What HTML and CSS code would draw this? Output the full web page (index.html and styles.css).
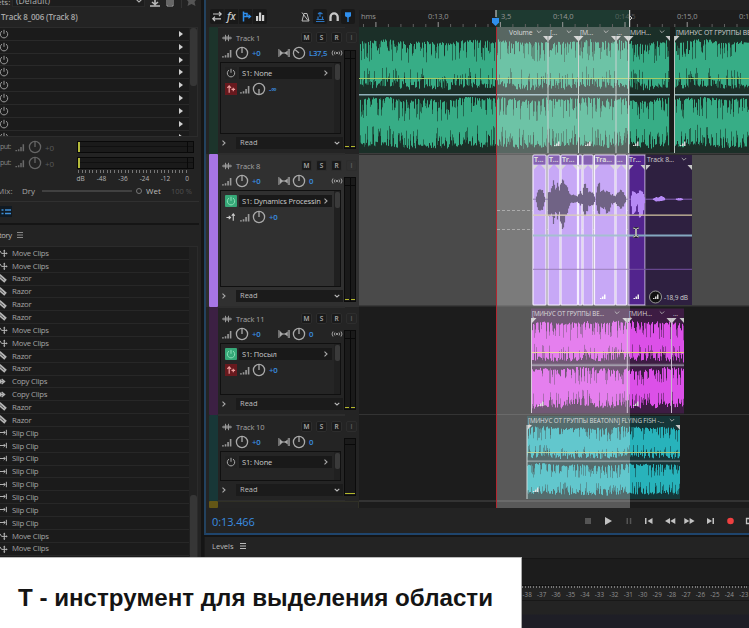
FILE: index.html
```html
<!DOCTYPE html>
<html lang="ru">
<head>
<meta charset="utf-8">
<title>Multitrack</title>
<link rel="stylesheet" href="styles.css">
</head>
<body>
<svg class="defs" aria-hidden="true">
  <symbol id="power" viewBox="0 0 10 10"><path d="M3 2.1a3.7 3.7 0 1 0 4 0M5 .8v4" fill="none" stroke="currentColor" stroke-width="1"/></symbol>
  <symbol id="knob" viewBox="0 0 14 14"><circle cx="7" cy="7" r="5.6" fill="none" stroke="currentColor" stroke-width="1.3"/><path d="M7 2v5" stroke="currentColor" stroke-width="1.3"/></symbol>
  <symbol id="bars" viewBox="0 0 12 10"><path d="M.5 8h2v1.500h-2zM3.500 7h1.800v2.500H3.500zM6.300 4.500h1.800v5H6.300zM9.100 1h1.800v8.500H9.100z" fill="currentColor"/></symbol>
  <symbol id="pan" viewBox="0 0 12 10"><path d="M.8 1v8M10.300 1v8M11.400 1v8" stroke="currentColor" stroke-width=".8"/><path d="M1.500 1.500 5 5 1.500 8.500zM9.700 2.500 6.500 5 9.700 7.500z" fill="currentColor"/><path d="M4 5h4" stroke="currentColor"/></symbol>
  <symbol id="wave" viewBox="0 0 10 8"><path d="M0 4h10M2 2.500v3M3.500 .8v6.400M5 2v4M6.500 .8v6.400M8 2.500v3" stroke="currentColor" stroke-width=".9"/></symbol>
  <symbol id="mono" viewBox="0 0 12 8"><path d="M2 1.500Q0 4 2 6.500M4 2.500Q2.800 4 4 5.500M8 2.500Q9.200 4 8 5.500M10 1.500Q12 4 10 6.500" fill="none" stroke="currentColor" stroke-width=".9"/><circle cx="6" cy="4" r="1.100" fill="currentColor"/></symbol>
  <symbol id="right" viewBox="0 0 6 8"><path d="M1.500 1.700 4 4 1.500 6.300" fill="none" stroke="currentColor" stroke-width="1.100"/></symbol>
  <symbol id="down" viewBox="0 0 8 6"><path d="M1.700 1.800 4 4 6.300 1.800" fill="none" stroke="currentColor" stroke-width="1.100"/></symbol>
  <symbol id="pre" viewBox="0 0 11 10"><path d="M3.500 9V2M1.500 3.800 3.500 1.500 5.500 3.800M6 5.500h4M8 3.500v4" fill="none" stroke="currentColor" stroke-width="1.300"/></symbol>
  <symbol id="post" viewBox="0 0 11 10"><path d="M.5 5.500h4M3 3.700l2 1.800-2 1.800M8 9V2M6.300 3.600 8 1.500 9.700 3.600" fill="none" stroke="currentColor" stroke-width="1.200"/></symbol>
  <symbol id="menu" viewBox="0 0 8 8"><path d="M1 1.500h6M1 4h6M1 6.500h6" stroke="currentColor"/></symbol>
  <symbol id="move" viewBox="0 0 12 10"><path d="M0 2.500h3M5 6h6M8 3v6.500M3 3l2 3" fill="none" stroke="currentColor" stroke-width="1.100"/><path d="M8 1.800 9.300 3.600H6.700zM8 10 9.300 8.400H6.700zM11.800 6 10 7.200V4.800z" fill="currentColor"/></symbol>
  <symbol id="razor" viewBox="0 0 12 10"><path d="M3.500 0 10.800 6.300 8 9.600.7 3.300z" fill="currentColor"/><path d="M3.600 3.200 8 7" stroke="#1c1c1c" stroke-width="1.100" stroke-dasharray="2 .8"/></symbol>
  <symbol id="copy" viewBox="0 0 12 10"><path d="M2 5h5M5 2.300 8.300 5 5 7.700M2 2l3 3-3 3" fill="none" stroke="currentColor" stroke-width="1.500"/></symbol>
  <symbol id="slip" viewBox="0 0 12 10"><path d="M1 5h8M10.300 2v6M3.300 3.300 1.500 5l1.800 1.700M7.300 3.300 9 5 7.300 6.700" fill="none" stroke="currentColor" stroke-width="1.100"/></symbol>
</svg>

<div class="app">
  <aside class="side">
    <div class="presets">
      <span class="presets-label">ets:</span>
      <div class="presets-select"><span>(Default)</span><svg class="i8"><use href="#down"/></svg></div>
      <svg class="presets-icons" viewBox="0 0 50 8"><path d="M1 6h10M3 2l3 2.500L9 2M6 0v4" fill="none" stroke="#bbb" stroke-width="1.600"/><path d="M18 0v6h6V0M20 0v5M22 0v5" fill="none" stroke="#aaa"/><path d="M32.500 0v8" stroke="#333"/><path d="M38 0h9l-1.500 2 1 4-4-2-4 2 1-4z" fill="#555"/></svg>
    </div>
    <div class="rack-title">Track 8_006 (Track 8)</div>
    <div class="rack">
      <div class="slots">
        <div class="slot"><svg><use href="#power"/></svg><i></i></div>
        <div class="slot"><svg><use href="#power"/></svg><i></i></div>
        <div class="slot"><svg><use href="#power"/></svg><i></i></div>
        <div class="slot"><svg><use href="#power"/></svg><i></i></div>
        <div class="slot"><svg><use href="#power"/></svg><i></i></div>
        <div class="slot"><svg><use href="#power"/></svg><i></i></div>
        <div class="slot"><svg><use href="#power"/></svg><i></i></div>
        <div class="slot"><svg><use href="#power"/></svg><i></i></div>
        <div class="slot"><svg><use href="#power"/></svg><i></i></div>
      </div>
      <div class="scroll"><b class="thumb-top"></b></div>
    </div>
    <div class="io"><span class="io-name">put:</span><svg class="i-bars"><use href="#bars"/></svg><svg class="i-knob"><use href="#knob"/></svg><span>+0</span><div class="io-meter"></div></div>
    <div class="io io-out"><span class="io-name">put:</span><svg class="i-bars"><use href="#bars"/></svg><svg class="i-knob"><use href="#knob"/></svg><span>+0</span><div class="io-meter"></div></div>
    <div class="db-ticks"></div>
    <div class="db-scale"><span>dB</span><span>-48</span><span>-36</span><span>-24</span><span>-12</span><span>0</span></div>
    <div class="mix"><span class="mix-name">Mix:</span><span class="mix-dry">Dry</span><div class="mix-line"></div><div class="mix-dot"></div><span class="mix-wet">Wet</span><span class="mix-val">100 %</span></div>
    <div class="rack-foot"><svg class="list-button" viewBox="0 0 12 11"><path d="M1.500 4h2M1.500 7.500h2M5 4h6M5 7.500h6" stroke="#3f8fd8" stroke-width="1.600"/></svg></div>
    <div class="history-head"><span>tory</span><svg class="i8"><use href="#menu"/></svg></div>
    <div class="history">
      <ul class="history-list">
        <li><svg><use href="#move"/></svg>Move Clips</li>
        <li><svg><use href="#move"/></svg>Move Clips</li>
        <li><svg><use href="#razor"/></svg>Razor</li>
        <li><svg><use href="#razor"/></svg>Razor</li>
        <li><svg><use href="#razor"/></svg>Razor</li>
        <li><svg><use href="#razor"/></svg>Razor</li>
        <li><svg><use href="#move"/></svg>Move Clips</li>
        <li><svg><use href="#move"/></svg>Move Clips</li>
        <li><svg><use href="#razor"/></svg>Razor</li>
        <li><svg><use href="#razor"/></svg>Razor</li>
        <li><svg><use href="#copy"/></svg>Copy Clips</li>
        <li><svg><use href="#copy"/></svg>Copy Clips</li>
        <li><svg><use href="#razor"/></svg>Razor</li>
        <li><svg><use href="#razor"/></svg>Razor</li>
        <li><svg><use href="#slip"/></svg>Slip Clip</li>
        <li><svg><use href="#slip"/></svg>Slip Clip</li>
        <li><svg><use href="#slip"/></svg>Slip Clip</li>
        <li><svg><use href="#slip"/></svg>Slip Clip</li>
        <li><svg><use href="#slip"/></svg>Slip Clip</li>
        <li><svg><use href="#slip"/></svg>Slip Clip</li>
        <li><svg><use href="#slip"/></svg>Slip Clip</li>
        <li><svg><use href="#slip"/></svg>Slip Clip</li>
        <li><svg><use href="#move"/></svg>Move Clips</li>
        <li><svg><use href="#move"/></svg>Move Clips</li>
      </ul>
      <div class="scroll"><b class="thumb-bottom"></b></div>
    </div>
  </aside>

  <main class="main">
    <section class="editor">
      <div class="top">
        <div class="tools">
          <svg class="tools-left" viewBox="0 0 57 15">
            <rect width="57" height="15" rx="2" fill="#191919"/>
            <path d="M14.200 0v15M28.400 0v15M42.600 0v15" stroke="#242424"/>
            <path d="M3 5h8M9 2.800 11.200 5 9 7.200M11 9.800H3M5 7.600 2.800 9.800 5 12" fill="none" stroke="#c8c8c8" stroke-width="1.200"/>
            <text x="17" y="11" class="fx">fx</text>
            <path d="M33.500 2.500v10M33.500 7.500h5.500M33.500 4.500h3.500v3" fill="none" stroke="#2f8fee" stroke-width="1.500"/><path d="M38.500 5l3 2.500-3 2.500z" fill="#2f8fee"/>
            <path d="M46 7h2.200v5H46zM49 3.500h2.200V12H49zM52 6h2.200v6H52z" fill="#d0d0d0"/>
          </svg>
          <svg class="tools-right" viewBox="0 0 57 15">
            <rect x="14" width="14" height="15" rx="2" fill="#191919"/><rect x="42" width="14" height="15" rx="2" fill="#191919"/>
            <path d="M3 12 5 4.500h3l2 7.500zM3 3.500l6 8" fill="none" stroke="#bbb"/>
            <path d="M17 12.500h8.500M17.500 10.500h7.500M19 10V7.500M23.500 10V7.500M21 3v5M19 5q2-2 4.500 0" fill="none" stroke="#2b74c0" stroke-width="1.200"/>
            <path d="M31.500 12V8a3.600 3.600 0 0 1 7.200 0v4" fill="none" stroke="#c8c8c8" stroke-width="2.300"/>
            <path d="M46 3.200h6v4l-3 1.600-3-1.600z" fill="#2f8fee"/><path d="M49 8v5" stroke="#2f8fee" stroke-width="1.300"/>
          </svg>
        </div>
        <svg class="ruler" id="ruler" viewBox="359 10 390 17"></svg>
      </div>

      <div class="session">
        <div class="track t1">
          <div class="strip"></div>
          <div class="head">
            <div class="name-row"><svg class="i-wave"><use href="#wave"/></svg><span class="name">Track 1</span><b>M</b><b>S</b><b>R</b><b class="dim">I</b></div>
            <div class="vol-row"><svg class="i-bars"><use href="#bars"/></svg><svg class="i-knob"><use href="#knob"/></svg><span class="val vol">+0</span><svg class="i-pan"><use href="#pan"/></svg><svg class="i-knob turned"><use href="#knob"/></svg><span class="val">L37,5</span><svg class="i-mono"><use href="#mono"/></svg></div>
            <div class="sends"><div class="send-list">
              <div class="send"><svg class="pw"><use href="#power"/></svg><div class="send-name"><span>S1: None</span><svg class="i-right"><use href="#right"/></svg></div></div>
              <div class="send-ctl"><svg class="route red"><use href="#pre"/></svg><svg class="i-bars"><use href="#bars"/></svg><svg class="i-knob flipped"><use href="#knob"/></svg><span class="val">-∞</span></div>
            </div><div class="send-scroll"><i></i></div></div>
            <div class="auto-row"><svg class="i-right"><use href="#right"/></svg><div class="auto"><span>Read</span><svg class="i8"><use href="#down"/></svg></div></div>
          </div>
          <div class="meter"><i></i></div>
          <svg class="lane" id="lane1" viewBox="359 27 390 127"></svg>
        </div>

        <div class="track t8">
          <div class="strip"></div>
          <div class="head">
            <div class="name-row"><svg class="i-wave"><use href="#wave"/></svg><span class="name">Track 8</span><b>M</b><b>S</b><b>R</b><b class="dim">I</b></div>
            <div class="vol-row"><svg class="i-bars"><use href="#bars"/></svg><svg class="i-knob"><use href="#knob"/></svg><span class="val vol">+0</span><svg class="i-pan"><use href="#pan"/></svg><svg class="i-knob"><use href="#knob"/></svg><span class="val">0</span><svg class="i-mono"><use href="#mono"/></svg></div>
            <div class="sends"><div class="send-list">
              <div class="send"><svg class="pw on"><use href="#power"/></svg><div class="send-name"><span>S1: Dynamics Processin</span><svg class="i-right"><use href="#right"/></svg></div></div>
              <div class="send-ctl"><svg class="route"><use href="#post"/></svg><svg class="i-bars"><use href="#bars"/></svg><svg class="i-knob"><use href="#knob"/></svg><span class="val">+0</span></div>
            </div><div class="send-scroll"><i></i></div></div>
            <div class="auto-row"><svg class="i-right"><use href="#right"/></svg><div class="auto"><span>Read</span><svg class="i8"><use href="#down"/></svg></div></div>
          </div>
          <div class="meter"><i></i></div>
          <svg class="lane" id="lane8" viewBox="359 154 390 153"></svg>
        </div>

        <div class="track t11">
          <div class="strip"></div>
          <div class="head">
            <div class="name-row"><svg class="i-wave"><use href="#wave"/></svg><span class="name">Track 11</span><b>M</b><b>S</b><b>R</b><b class="dim">I</b></div>
            <div class="vol-row"><svg class="i-bars"><use href="#bars"/></svg><svg class="i-knob"><use href="#knob"/></svg><span class="val vol">+0</span><svg class="i-pan"><use href="#pan"/></svg><svg class="i-knob"><use href="#knob"/></svg><span class="val">0</span><svg class="i-mono"><use href="#mono"/></svg></div>
            <div class="sends"><div class="send-list">
              <div class="send"><svg class="pw on"><use href="#power"/></svg><div class="send-name"><span>S1: Посыл</span><svg class="i-right"><use href="#right"/></svg></div></div>
              <div class="send-ctl"><svg class="route red"><use href="#pre"/></svg><svg class="i-bars"><use href="#bars"/></svg><svg class="i-knob"><use href="#knob"/></svg><span class="val">+0</span></div>
            </div><div class="send-scroll"><i></i></div></div>
            <div class="auto-row"><svg class="i-right"><use href="#right"/></svg><div class="auto"><span>Read</span><svg class="i8"><use href="#down"/></svg></div></div>
          </div>
          <div class="meter"><i></i></div>
          <svg class="lane" id="lane11" viewBox="359 307 390 108"></svg>
        </div>

        <div class="track t10">
          <div class="strip"></div>
          <div class="head">
            <div class="name-row"><svg class="i-wave"><use href="#wave"/></svg><span class="name">Track 10</span><b>M</b><b>S</b><b>R</b><b class="dim">I</b></div>
            <div class="vol-row"><svg class="i-bars"><use href="#bars"/></svg><svg class="i-knob"><use href="#knob"/></svg><span class="val vol">+0</span><svg class="i-pan"><use href="#pan"/></svg><svg class="i-knob"><use href="#knob"/></svg><span class="val">0</span></div>
            <div class="sends"><div class="send-list">
              <div class="send"><svg class="pw"><use href="#power"/></svg><div class="send-name"><span>S1: None</span><svg class="i-right"><use href="#right"/></svg></div></div>
            </div><div class="send-scroll"><i></i></div></div>
            <div class="auto-row"><svg class="i-right"><use href="#right"/></svg><div class="auto"><span>Read</span><svg class="i8"><use href="#down"/></svg></div></div>
          </div>
          <div class="meter single"><i></i></div>
          <svg class="lane" id="lane10" viewBox="359 415 390 86"></svg>
        </div>
        <div class="track tnext"><div class="strip"></div><div class="next-head"></div><div class="next-lane"></div></div>
        <div class="selection"></div>
        <svg class="cursor" viewBox="0 0 8 11"><path d="M1 1q3 0 3 2v5q0 2-3 2M7 1Q4 1 4 3v5q0 2 3 2" fill="none" stroke="#111" stroke-width="2"/><path d="M1 1q3 0 3 2v5q0 2-3 2M7 1Q4 1 4 3v5q0 2 3 2" fill="none" stroke="#eee" stroke-width=".9"/></svg>
      </div>

      <div class="transport">
        <span class="time">0:13.466</span>
        <svg class="buttons" viewBox="0 0 169 14" fill="#c2c2c2">
          <path d="M5 4h6v6H5z" fill="#555"/><path d="M25 3l7 4-7 4z"/><path d="M46.500 4h1.500v6h-1.500zM49.800 4h1.500v6h-1.500z" fill="#555"/>
          <path d="M65 4h1.500v6H65zM72.500 4v6L67.500 7z"/><path d="M90 4v6l-5-3zM95.300 4v6l-5-3z"/><path d="M104.300 4v6l5-3zM109.600 4v6l5-3z"/><path d="M127 4v6l5-3zM132.500 4h1.500v6h-1.500z"/>
          <circle cx="150.500" cy="7" r="3.300" fill="#ef4040"/><path d="M170 4.500h-3.500v5H170" fill="none" stroke="#c2c2c2" stroke-width="1.300"/>
        </svg>
      </div>
    </section>

    <section class="levels">
      <div class="levels-head"><span>Levels</span><svg class="i8"><use href="#menu"/></svg></div>
      <div class="levels-meter"></div>
      <div class="levels-ticks"></div>
      <div class="levels-scale"><span>-38</span><span>-37</span><span>-36</span><span>-35</span><span>-34</span><span>-33</span><span>-32</span><span>-31</span><span>-30</span><span>-29</span><span>-28</span><span>-27</span><span>-26</span><span>-25</span><span>-24</span><span>-23</span></div>
      <div class="levels-foot"></div>
    </section>
  </main>
  <div class="caption">T - инструмент для выделения области</div>
</div>
<script src="lanes.js"></script>
</body>
</html>
```
FILE: styles.css
```css
* { box-sizing: border-box; }
body { margin: 0; background: #151515; font-family: "Open Sans", "Noto Sans", sans-serif; font-size: 8px; color: #a9a9a9; overflow: hidden; }
svg { display: block; flex: none; }
.defs { position: absolute; width: 0; height: 0; }
.app { position: relative; width: 749px; height: 628px; display: grid; grid-template-columns: 201px 1fr; column-gap: 3px; overflow: hidden; }
.i8 { width: 8px; height: 8px; }

/* left column */
.side { background: #232323; display: flex; flex-direction: column; height: 628px; white-space: nowrap; }
.presets { height: 8px; display: flex; line-height: 8px; overflow: hidden; color: #b0b0b0; }
.presets-label { width: 12px; margin-top: -2px; margin-left: -3px; margin-right: 3px; }
.presets-select { width: 133px; height: 7px; background: #1d1d1d; border: solid #2a2a2a; border-width: 0 1px 1px; display: flex; justify-content: space-between; padding: 0 1px 0 3px; font-size: 8.500px; }
.presets-select span { margin-top: -3px; }
.presets-select svg { margin-top: -3px; }
.presets-icons { width: 50px; height: 8px; margin-left: 4px; }
.rack-title { height: 19px; line-height: 18px; padding-left: 1px; color: #a8a8a8; font-size: 8px; font-weight: 600; letter-spacing: -.16px; }
.rack { height: 110px; width: 198px; background: #1b1b1b; border: 1px solid #2c2c2c; border-left: 0; display: flex; overflow: hidden; }
.slots { flex: 1; }
.slot { height: 12.840px; border-bottom: 1px solid #292929; display: flex; justify-content: space-between; align-items: center; padding-right: 6px; }
.slot svg { width: 10px; height: 10px; margin-left: -1px; color: #9c9c9c; }
.slot i { border-left: 4px solid #d0d0d0; border-top: 3px solid transparent; border-bottom: 3px solid transparent; }
.scroll { width: 8px; background: #212121; display: flex; justify-content: center; }
.scroll b { width: 7px; background: #363636; border-radius: 3px; }
.thumb-top { height: 58px; }
.thumb-bottom { height: 70px; margin-top: 248px; }
.io { height: 16px; margin-top: 2px; display: flex; align-items: center; color: #5a5a5a; }
.io.io-out { margin-top: 0; }
.io-name { width: 15px; color: #858585; font-size: 7px; letter-spacing: -.5px; line-height: 12px; margin-top: -1px; }
.io .i-bars { width: 10px; height: 9px; color: #6a6a6a; }
.io .i-knob { margin: 0 3px; color: #656565; }
.io-meter { width: 117px; height: 12px; margin-left: auto; margin-right: 7px; border: 1px solid #090909; background: linear-gradient(#090909, #090909) 109px 0 / 1px 100% no-repeat, linear-gradient(#b4ba3b, #b4ba3b) 0 0 / 2px 100% no-repeat, linear-gradient(#1a1a1a 45%, #101010 45%, #101010 55%, #1a1a1a 55%); }
.db-ticks { height: 3px; margin: -1px 0 0 78px; width: 109px; background: repeating-linear-gradient(90deg, #777 0 1px, transparent 1px 3.600px); }
.db-scale { height: 12px; width: 124px; margin-left: 70px; display: grid; grid-template-columns: 21px 21px 22px 21px 21px 22px; text-align: center; font-size: 6.500px; line-height: 11px; color: #b5b5b5; }
.mix { height: 14px; margin-top: -1px; display: flex; align-items: center; line-height: 12px; }
.mix-name { width: 22px; margin-left: -3px; color: #999; }
.mix-dry { width: 22px; margin-left: 3px; }
.mix-line { width: 90px; height: 2px; background: #414141; margin-left: -2px; }
.mix-dot { width: 6px; height: 6px; border: 1px solid #777; border-radius: 50%; margin-left: 4px; }
.mix-wet { width: 25px; margin-left: 4px; color: #bbb; }
.mix-val { color: #505050; font-size: 7.500px; }
.rack-foot { height: 24px; border-top: 1px solid #303030; margin-top: 3px; padding-top: 4px; border-bottom: 2px solid #151515; width: 199px; }
.list-button { width: 12px; height: 11px; background: #111a22; }
.history-head { height: 19px; display: flex; align-items: center; gap: 4px; margin-left: -1px; font-size: 7.600px; letter-spacing: -.4px; line-height: 14px; color: #bbb; }
.history-head svg { color: #888; }
.history { flex: 1; width: 198px; margin-top: 2px; background: #1b1b1b; border: 1px solid #2b2b2b; border-left: 0; display: flex; }
.history-list { flex: 1; list-style: none; margin: 0; padding: 0; }
.history-list li { height: 12.860px; display: flex; align-items: center; gap: 4px; border-bottom: 1px solid #272727; line-height: 12px; padding-bottom: .6px; color: #a5a5a5; font-size: 7.800px; letter-spacing: -.25px; }
.history-list svg { width: 11px; height: 9px; margin-left: -3px; color: #b5b5b5; }

/* editor */
.main { display: flex; flex-direction: column; height: 628px; min-width: 0; }
.editor { height: 535px; background: #232323; border-left: 2px solid #23425f; border-bottom: 2px solid #1f456d; display: flex; flex-direction: column; }
.top { display: flex; height: 27px; padding-top: 9px; }
.tools { width: 153px; padding-left: 4px; display: flex; gap: 32px; }
.tools svg { width: 57px; height: 15px; }
.fx { font: italic 600 10px "Open Sans", sans-serif; fill: #c8c8c8; }
.ruler { width: 390px; height: 17px; margin-top: 1px; }
.session { position: relative; height: 481px; overflow: hidden; }
.track { display: grid; grid-template-columns: 12px 127px 14px 390px; background: #242424; border-left: 1px solid #202020; margin-left: -1px; }
.strip { width: 9px; margin-left: 3px; border-radius: 1px; }
.t1 { height: 127px; }
.t8 { height: 153px; background: #303030; }
.t11 { height: 108px; }
.t10 { height: 86px; }
.t1 .strip { background: #1c342b; }
.t8 .strip { background: #a775e5; }
.t11 .strip { background: #3c2043; }
.t10 .strip { background: #183737; }
.tnext .strip { background: #635616; }
.tnext { height: 7px; }
.next-head { grid-column: 2 / 4; border: solid #303026; border-width: 1px 1px 0 0; }
.next-lane { background: #1c1c1c; border-top: 1px solid #333; }
.head { display: flex; flex-direction: column; padding: 1px 2px 4px 3px; min-width: 0; border-bottom: 1px solid #2d2d2d; border-top: 1px solid #2d2d2d; }
.t1 .head { padding-top: 0; }
.name-row { height: 20px; width: 134px; padding-bottom: 1px; display: flex; align-items: center; gap: 4px; color: #a4a4a4; }
.i-wave { width: 10px; height: 8px; margin-left: 1px; }
.name { width: 61px; flex: none; font-size: 7.500px; letter-spacing: -.12px; }
.name-row b { width: 11px; height: 11px; background: #1a1a1a; border: 1px solid #2d2d2d; border-radius: 2px; font: 600 6.500px/9px "Open Sans", sans-serif; text-align: center; color: #b0b0b0; flex: none; }
.name-row b:nth-of-type(1) { margin-left: auto; }
.name-row .dim { background: transparent; color: #606060; }
.vol-row { height: 11px; display: flex; align-items: center; margin-top: -.5px; margin-bottom: .5px; }
.i-bars { width: 12px; height: 9px; color: #999; }
.i-knob { width: 14px; height: 14px; margin: 0 3px 0 2px; color: #aaa; }
.turned { transform: rotate(-50deg); }
.flipped { transform: rotate(180deg); }
.i-pan { width: 12px; height: 10px; color: #aaa; }
.i-mono { width: 12px; height: 8px; color: #aaa; margin-left: auto; }
.val { color: #3a8de0; font-size: 7.800px; font-weight: 600; letter-spacing: -.3px; line-height: 11px; }
.vol { width: 26px; }
.sends { flex: 1; margin-top: 3px; background: #252525; border: 1px solid #101010; display: flex; width: 121px; margin-left: -1px; min-height: 0; }
.t8 .sends { background: #303030; }
.send-list { flex: 1; padding: 4px 3px 0 4px; }
.send { display: flex; gap: 2px; height: 12px; }
.pw { width: 12px; height: 12px; padding: 1px; color: #aaa; background: #222; }
.pw.on { background: #36a878; color: #8ce0b8; border-radius: 1px; }
.send-name { width: 93px; height: 12px; background: #191919; display: flex; align-items: center; justify-content: space-between; padding: 0 3px; color: #ccc; font-size: 7.500px; line-height: 11px; white-space: nowrap; letter-spacing: -.14px; margin-right: -3px; }
.send-ctl { display: flex; align-items: center; height: 12px; margin-top: 4px; }
.send-ctl .i-bars { margin-left: 2px; }
.send-ctl .i-knob { margin-left: 1px; }
.route { width: 12px; height: 12px; padding: 1px; color: #ccc; }
.red { background: #68191e; color: #ee9e9e; }
.send-scroll { width: 6px; background: #202020; padding: 1px 0 0 1px; }
.send-scroll i { display: block; height: 16px; background: #3a3a3a; border-radius: 2px; }
.auto-row { height: 13px; margin-top: 2px; display: flex; align-items: center; justify-content: space-between; }
.i-right { width: 6px; height: 8px; color: #aaa; }
.auto { width: 107px; height: 12px; background: #1b1b1b; display: flex; align-items: center; justify-content: space-between; padding: 0 2px 0 4px; color: #bbb; font-size: 7.500px; line-height: 11px; }
.meter { width: 12px; margin: 23px 0 5px -1px; background: linear-gradient(#090909, #090909) 0 7px / 100% 1px no-repeat, linear-gradient(90deg, #1a1a1a 5px, #080808 5px, #080808 6px, #1a1a1a 6px); border: 1px solid #0b0b0b; display: flex; align-items: flex-end; }
.meter.single { background: linear-gradient(#090909, #090909) 0 5px / 100% 1px no-repeat, #1a1a1a; }
.meter i { width: 100%; height: 1px; margin-bottom: 1px; background: linear-gradient(90deg, #b4b82c 4px, transparent 4px, transparent 6px, #b4b82c 6px); }
.meter.single i { background: #b4b82c; }
.lane { width: 390px; height: 100%; }
.lane text { font-family: "Open Sans", "Noto Sans", sans-serif; font-size: 6.800px; letter-spacing: -.12px; fill: #d0d0d0; }
.ruler text { font-family: "Open Sans", sans-serif; font-size: 7.500px; fill: #969696; letter-spacing: -.1px; }
.selection { position: absolute; left: 290px; top: 0; width: 134px; bottom: 0; background: rgba(255, 255, 255, .27); border-left: 1px solid #b22630; }
.cursor { position: absolute; left: 426px; top: 200px; width: 8px; height: 11px; }
.transport { height: 25px; display: flex; align-items: center; justify-content: space-between; padding-left: 6px; }
.time { color: #3a8de0; font-size: 11px; font-weight: 500; letter-spacing: -.1px; margin-top: 2px; }
.buttons { width: 169px; height: 14px; }

/* levels */
.levels { flex: 1; margin: 2px 0 0 0; background: #232323; border-left: 1px solid #1a1a1a; display: flex; flex-direction: column; }
.levels-head { height: 21px; padding: 0 0 3px 7px; display: flex; align-items: center; gap: 5px; font-size: 7.500px; color: #bbb; line-height: 16px; }
.levels-meter { height: 28px; background: #1c1c1c; border-top: 1px solid #161616; border-bottom: 1px solid #111; }
.levels-ticks { height: 2px; background: repeating-linear-gradient(90deg, #777 0 1px, transparent 1px 2.880px); }
.levels-scale { height: 12px; display: grid; grid-template-columns: repeat(16, 14.440px); margin-left: 315px; text-align: center; font-size: 6.300px; line-height: 13px; color: #929292; }
.levels-foot { flex: 1; border-top: 1px solid #181818; background: linear-gradient(#232323 13px, #1e1e26 14px); }

.caption { position: absolute; left: 0; top: 557px; width: 522px; height: 71px; background: #fff; border-top: 1px solid #bbb; border-right: 1px solid #aaa; padding-left: 18px; color: #141414; font: 700 24.150px/79px "Liberation Sans", Arial, sans-serif; white-space: nowrap; }
```
FILE: lanes.js
```js
// Seeded generator keeps the waveforms stable between loads
let seed = 41;
const rnd = () => (seed = (seed * 16807) % 2147483647) / 2147483647;
const el = (id) => document.getElementById(id);
const rect = (x, y, w, h, c, extra = '') => `<rect x="${x}" y="${y}" width="${w}" height="${h}" fill="${c}" ${extra}/>`;
const text = (x, y, s, extra = '') => `<text x="${x}" y="${y}" ${extra}>${s}</text>`;
const chevron = (x, y) => `<path d="M${x - 2.2} ${y - 1}l2.200 2.200 2.200-2.200" fill="none" stroke="#aaa" stroke-width=".9"/>`;
const notch = (x, y, side) => `<path d="M${x} ${y}v5l${side * 4.5}-5z" fill="#c8c8c8"/>`;
const gain = (x, y, c = '#d6d6d6') => `<path d="M${x} ${y}h1.500v-1h-1.500zM${x + 2} ${y}h1.500v-2.500h-1.500zM${x + 4} ${y}h1.500v-4.500h-1.500z" fill="${c}"/>`;

function band(x0, x1, top, bottom, full, mid) {
  const h = bottom - top;
  let core = '', spikes = '';
  for (let x = x0; x < x1; x += 1) {
    const slow = Math.sin(x / 17 + top) * 0.02 + Math.sin(x / 6.3) * 0.015;
    const up = rnd(), dn = rnd();
    const a = top + h * Math.max(0, 0.03 + slow + (up > 0.6 ? 0.12 + 0.3 * rnd() : 0.07 * rnd()));
    const b = bottom - h * Math.max(0, 0.04 - slow + (dn > 0.55 ? 0.12 + 0.28 * rnd() : 0.11 * rnd()));
    core += `M${x + 0.5} ${a.toFixed(1)}V${b.toFixed(1)}`;
    const c = top + h * (0.05 + slow + 0.25 * rnd()), d = bottom - h * (0.05 - slow + 0.25 * rnd());
    spikes += `M${x + 0.5} ${c.toFixed(1)}V${d.toFixed(1)}`;
  }
  return `<path d="${spikes}" stroke="${mid}"/><path d="${core}" stroke="${full}"/>`;
}

// Ruler
let r = rect(359, 10, 390, 17, '#1e1e1e') + rect(496, 10, 134, 17, '#1e3a31');
for (let i = 0; i < 32; i++) {
  const x = 363 + i * 12.45;
  const tall = i % 5 === 1;
  r += rect(x.toFixed(1), tall ? 22 : 24, 1, tall ? 5 : 3, tall ? '#999' : '#606060');
}
r += text(361, 18.5, 'hms') + text(428, 18.5, '0:13,0') + text(501, 18.5, '3,5') + text(553, 18.5, '0:14,0') +
  text(615, 18.5, '0:14,5', 'opacity=".45"') + text(677, 18.5, '0:15,0') + text(739, 18.5, '0:15,5') +
  rect(495.5, 10, 1, 7, '#ddd') + rect(629, 10, 1.2, 17, '#ccc') +
  '<path d="M629 15l3 3-3 3" fill="none" stroke="#ccc"/>' +
  '<path d="M492 18h7v4.500l-3.500 3.500-3.500-3.500z" fill="#2f8fee"/>';
el('ruler').innerHTML = r;

// Track 1
let s = rect(359, 27, 390, 127, '#1b2f28');
s += band(360, 669, 39, 91, '#37ad86', '#24674f') + band(360, 669, 96, 150, '#37ad86', '#24674f');
s += band(675, 749, 39, 91, '#37ad86', '#24674f') + band(675, 749, 96, 150, '#37ad86', '#24674f');
s += rect(359, 92, 390, 5, '#1b2f28') + rect(359, 94, 390, 1.5, '#8fb0ba') + rect(359, 78, 390, 1, '#a3cc66');
s += rect(670, 27, 5, 125, '#191d1b') + rect(359, 153, 390, 1, '#3c3c3c');
for (const x of [547.5, 578, 615.5, 628, 674]) s += rect(x, 36, 1, 117, '#b8c4bf');
for (const x of [547.5, 578, 615.5, 628]) s += notch(x, 36, -1) + notch(x + 1, 36, 1);
s += notch(670, 36, -1) + notch(675, 36, 1);
s += text(509, 34.5, 'Volume') + chevron(539, 31.5) + text(550, 34.5, '[...') + chevron(569, 31.5) +
  text(580, 34.5, '[М...') + chevron(606, 31.5) + text(617, 34.5, '...') + text(630, 34.5, 'МИН...') + chevron(662, 31.5) +
  text(676, 34.5, '[МИНУС ОТ ГРУППЫ BEATONN]');
s += gain(554, 146) + gain(585, 146) + gain(633, 146) + gain(680, 146);
el('lane1').innerHTML = s;

// Track 8
s = rect(359, 154, 390, 153, '#4a4a4a') + rect(359, 154, 390, 1, '#2c2c2c') + rect(359, 305.5, 390, 1.5, '#292929');
s += '<path d="M497 210.500h132M497 229.500h132" stroke="#8c8c8c" stroke-dasharray="3 2"/>';
const parts = [[533, 546, 'T...'], [548, 560, 'T...'], [561, 577.5, 'Tr...'], [578.5, 582, ''], [583, 593, ''], [594.5, 615, 'Tra...'], [616, 626.5, '...']];
for (const [a, b, label] of parts) {
  s += rect(a, 155, b - a, 150, '#b388f3', 'stroke="#f2e8ff" stroke-width="1.200" rx="1"') + rect(a + .5, 155.5, b - a - 1, 9, '#5a2a96') +
    notch(a + .5, 165, 1) + notch(b - .5, 165, -1) + `<text x="${a + 1}" y="162" fill="#fff" font-weight="700">${label}</text>`;
}
s += rect(628, 155, 17, 150, '#52248d', 'stroke="#d8c8ea" stroke-width="1"') + text(629, 162, 'Tr...', 'font-weight="600"');
s += rect(645.5, 155, 46.5, 150, '#2e2040') + text(647, 162, 'Track 8...') + chevron(684, 159);
s += notch(646, 165, 1) + notch(692, 165, -1) + notch(645, 165, -1) + notch(629, 165, 1);
const blobs = [[540, 4.5, 13, 15], [549, 2, 10, 24], [553, 3, 20, 26], [557, 3, 18, 22], [562, 4, 22, 33], [565, 5, 16, 18], [571, 9, 5, 4], [580, 3, 8, 6], [585, 3.5, 17, 18], [590, 5, 9, 8], [598, 2.5, 20, 18], [602, 5, 11, 11], [607.5, 4, 10, 17], [612, 4, 5, 5], [620, 6, 10, 10]];
const vocals = [[633.5, 3.5, 10, 19], [636, 2.500, 7, 6], [640.5, 4, 10, 21], [657, 5, 2, 2], [661, 4, 3, 1.500], [679, 4, 1, 1]];
const shape = (list, c) => {
  let d = '';
  for (let x = 533; x < 692; x += 1) {
    let u = 0, v = 0;
    for (const [m, w, hi, lo] of list) {
      const t = Math.max(0, 1 - ((x - m) / w) ** 2);
      u = Math.max(u, hi * t); v = Math.max(v, lo * t);
    }
    const k = 0.68 + 0.32 * rnd();
    if (u + v > .6) d += `M${x + .5} ${(199 - u * k).toFixed(1)}V${(199 + v * k + .6).toFixed(1)}`;
  }
  return `<path d="${d}" stroke="${c}" stroke-width="1.200"/>`;
};
s += rect(533, 198.7, 95, 1, '#6a4d93') + shape(blobs, '#3c2a58') + rect(629, 198.7, 63, 1, '#805cb0') + shape(vocals, '#b689f5');
s += rect(533, 214.5, 159, 1.3, '#cbbd9c') + rect(533, 234.5, 159, 2, '#84a7c0') + rect(533, 268.8, 159, 1, '#7650a2');
s += gain(600, 299, '#fff') + gain(633.5, 299, '#eee') +
  '<circle cx="655.500" cy="297" r="6" fill="#111" stroke="#999"/>' + gain(653, 299) + text(664, 300, '-18,9 dB', 'style="font-size:6.500px"');
el('lane8').innerHTML = s;

// Stereo tracks below
s = rect(359, 307, 390, 108, '#1c1c1c') + rect(359, 414, 390, 1, '#333') + rect(531, 308.5, 153, 105, '#3d1c43') +
  band(531, 684, 320, 363, '#dc50e8', '#8d3696') + band(531, 684, 366.5, 410, '#dc50e8', '#8d3696') +
  rect(531, 363, 153, 4, '#4b2c50') + rect(531, 364.5, 153, 1.3, '#8f8f9d') + rect(531, 352, 153, 1, '#eac87d');
for (const x of [531, 626.8, 671]) s += rect(x, 318, 1, 95, '#c8b9cb') + notch(x + 1, 318, 1);
s += notch(626.8, 318, -1) + notch(671, 318, -1) + notch(684, 318, -1);
s += text(532, 315.5, '[МИНУС ОТ ГРУППЫ BE...', 'textLength="72" lengthAdjust="spacingAndGlyphs"') + chevron(617, 312.5) + text(629, 315.5, '[МИН...') + chevron(662, 312.5) + text(673, 315.5, '...') +
  gain(538, 406) + gain(633, 406);
el('lane11').innerHTML = s;

s = rect(359, 415, 390, 86, '#1c1c1c') + rect(359, 500, 390, 1, '#333') + rect(527, 416, 153, 83, '#163638') +
  band(527, 680, 426, 460, '#28b3bb', '#1b6e73') + band(527, 680, 463, 496.5, '#28b3bb', '#1b6e73') +
  rect(527, 459.5, 153, 3.5, '#1b3a3c') + rect(527, 460.5, 153, 1.3, '#708284') + rect(527, 452, 153, 1, '#a1c77c') +
  rect(526.5, 425, 1, 74, '#bccccc') + notch(527.5, 425, 1) + notch(680, 425, -1) +
  text(528, 423, '[МИНУС ОТ ГРУППЫ BEATONN] FLYING FISH -...', 'textLength="136" lengthAdjust="spacingAndGlyphs"') + chevron(672, 420) + gain(533, 492);
el('lane10').innerHTML = s;
```
